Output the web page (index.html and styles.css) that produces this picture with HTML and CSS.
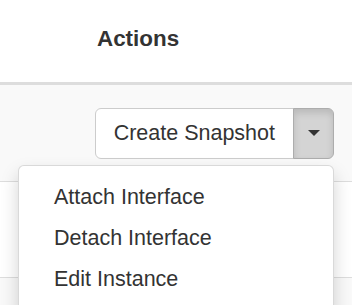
FILE: index.html
```html
<!DOCTYPE html>
<html lang="en">
<head>
  <meta charset="UTF-8" />
  <meta name="viewport" content="width=device-width, initial-scale=1.0" />
  <title>Instances</title>
  <link rel="stylesheet" href="styles.css">
</head>
<body>
  <div class="table">
    <div class="thead">
      <div class="th">Actions</div>
    </div>

    <div class="row odd first">
      <div class="btn-group open">
        <button class="btn">Create Snapshot</button>
        <button class="btn toggle active"><span class="caret"></span></button>
        <ul class="dropdown-menu">
          <li><a href="#">Attach Interface</a></li>
          <li><a href="#">Detach Interface</a></li>
          <li><a href="#">Edit Instance</a></li>
        </ul>
      </div>
    </div>

    <div class="row"></div>

    <div class="row odd"></div>
  </div>
</body>
</html>
```

FILE: styles.css
```css
body {
  margin: 0;
  background: #fff;
  font-family: 'Liberation Sans', Arial, sans-serif;
  font-size: 21.5px;
  line-height: 30px;
  color: #333;
}
.thead {
  height: 85px;
  box-sizing: border-box;
  padding: 24px 0 0 97px;
  border-bottom: 3px solid #ddd;
}
.th {
  font-weight: bold;
  font-size: 22.4px;
}
.row {
  height: 95px;
  border-top: 1px solid #ddd;
  display: flex;
  justify-content: flex-end;
  align-items: center;
  padding-right: 18px;
}
.row.first {
  height: 96px;
  border-top: none;
}
.row.odd {
  background: #f9f9f9;
}
.btn-group {
  position: relative;
  display: flex;
}
.btn {
  font-family: inherit;
  font-size: 21.5px;
  line-height: 30px;
  color: #333;
  background: #fff;
  border: 1px solid #ccc;
  border-radius: 6px 0 0 6px;
  padding: 9px 18px;
  margin: 0;
  height: 51px;
}
.btn.toggle {
  width: 41px;
  padding: 0;
  margin-left: -1px;
  border-radius: 0 6px 6px 0;
  display: flex;
  align-items: center;
  justify-content: center;
}
.btn.toggle.active {
  background: #d4d4d4;
  border-color: #adadad;
  box-shadow: inset 0 4px 7px rgba(0, 0, 0, 0.125);
}
.caret {
  width: 0;
  height: 0;
  border-top: 6px solid #333;
  border-left: 6px solid transparent;
  border-right: 6px solid transparent;
}
.dropdown-menu {
  position: absolute;
  top: 100%;
  right: 0;
  width: 316px;
  box-sizing: border-box;
  margin: 6px 0 0;
  padding: 11px 0;
  list-style: none;
  background: #fff;
  border: 1px solid rgba(0, 0, 0, 0.15);
  border-radius: 6px;
  box-shadow: 0 9px 18px rgba(0, 0, 0, 0.175);
  z-index: 10;
}
.dropdown-menu a {
  display: block;
  padding: 5.5px 20px 5.5px 35px;
  color: #333;
  text-decoration: none;
  white-space: nowrap;
}
```
